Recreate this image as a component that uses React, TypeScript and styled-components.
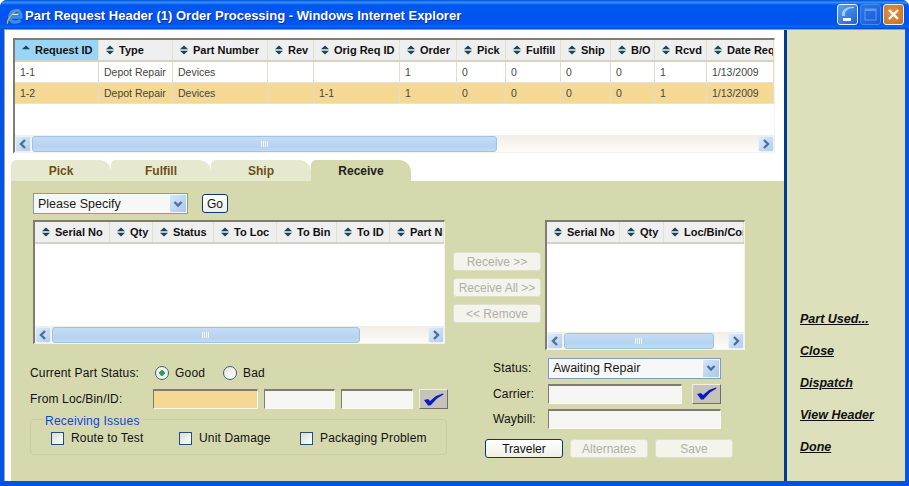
import styled, { createGlobalStyle } from 'styled-components'

const GlobalStyle = createGlobalStyle`
    html, body {
        margin: 0;
        padding: 0;
        width: 909px;
        height: 486px;
        overflow: hidden;
        background: #fff;
    }
    * {
        box-sizing: border-box;
    }
`

const Window = styled.div`
    width: 909px;
    height: 486px;
    display: flex;
    flex-direction: column;
    background: #0053e5;
    border-radius: 7px 7px 0 0;
    font-family: 'Liberation Sans', Arial, sans-serif;
    font-size: 12px;
    color: #111;
`

const TitleBar = styled.div`
    height: 29px;
    flex: none;
    display: flex;
    align-items: center;
    padding: 2px 5px 0 6px;
    border-radius: 7px 7px 0 0;
    background: linear-gradient(
        to bottom,
        #0a5fe0 0,
        #0a5fe0 1px,
        #3d95ff 2px,
        #2a80f8 3px,
        #0058ee 5px,
        #0053ee 24px,
        #0a66f4 27px,
        #0045c8 29px
    );
`

const TitleText = styled.div`
    flex: 1;
    margin-left: 1px;
    color: #fff;
    font-family: 'Liberation Sans', Arial, sans-serif;
    font-weight: bold;
    font-size: 13px;
    text-shadow: 1px 1px 0 #0a2f9c;
    white-space: nowrap;
`

const WinButton = styled.div<{ $kind: 'min' | 'max' | 'close' }>`
    width: 21px;
    height: 21px;
    margin-left: 2px;
    margin-bottom: 2px;
    border-radius: 3px;
    border: 1px solid ${(p) => (p.$kind === 'max' ? '#3f8cf0' : '#e8f0ff')};
    background: ${(p) =>
        p.$kind === 'close'
            ? 'radial-gradient(circle at 40% 40%, #e09448, #c86f1c)'
            : p.$kind === 'max'
            ? 'linear-gradient(135deg, #2c74e6, #1a5bd6)'
            : 'linear-gradient(135deg, #5aa2ee, #1f62d8)'};
    display: flex;
    align-items: center;
    justify-content: center;
`

const Body = styled.div`
    flex: 1;
    min-height: 0;
    display: flex;
    margin: 0 4px 5px;
    background: #fff;
    border-top: 1px solid #9c9c90;
`

const Main = styled.div`
    width: 780px;
    flex: none;
    display: flex;
    flex-direction: column;
    border-left: 1px solid #a8a89c;
`

const SidePanel = styled.div`
    flex: 1;
    display: flex;
    flex-direction: column;
    justify-content: flex-end;
    gap: 18px;
    padding: 0 0 27px 13px;
    background: #dee0bb;
    border-left: 3px solid #003c8f;
`

const SideLink = styled.a`
    height: 14px;
    line-height: 14px;
    font-size: 12.5px;
    font-weight: bold;
    font-style: italic;
    text-decoration: underline;
    color: #111;
`

const GridFrame = styled.div<{ $width: number; $height: number }>`
    width: ${(p) => p.$width}px;
    height: ${(p) => p.$height}px;
    flex: none;
    display: flex;
    flex-direction: column;
    background: #fff;
    border-style: solid;
    border-width: 2px 1px 1px 2px;
    border-color: #7f7d72 #f4f2ea #f4f2ea #7f7d72;
`

const TopGrid = styled(GridFrame)`
    margin: 8px 0 7px 8px;
`

const HeaderRow = styled.div<{ $columns: string; $height: number }>`
    display: grid;
    grid-template-columns: ${(p) => p.$columns};
    height: ${(p) => p.$height}px;
    flex: none;
    background: #efefef;
    border-bottom: 2px solid #d6d3c4;
    overflow: hidden;
`

const HeaderCell = styled.div<{ $active?: boolean }>`
    display: flex;
    align-items: center;
    gap: 5px;
    padding-left: 7px;
    font-size: 11px;
    font-weight: bold;
    white-space: nowrap;
    overflow: hidden;
    background: ${(p) => (p.$active ? '#99d5f6' : 'transparent')};
    border-right: 1px solid #e2e2ca;
`

const DataRow = styled.div<{ $columns: string; $selected?: boolean }>`
    display: grid;
    grid-template-columns: ${(p) => p.$columns};
    height: 21px;
    flex: none;
    background: ${(p) => (p.$selected ? '#f5d893' : '#fff')};
    border-bottom: 1px solid #e6e2d6;
`

const DataCell = styled.div`
    display: flex;
    align-items: center;
    padding-left: 5px;
    font-size: 10.5px;
    color: #46463e;
    white-space: nowrap;
    overflow: hidden;
    border-right: 1px solid #e2dccc;
`

const GridSpacer = styled.div`
    flex: 1;
`

const Scrollbar = styled.div`
    height: 17px;
    flex: none;
    display: flex;
    align-items: center;
    gap: 1px;
    background: linear-gradient(to bottom, #f1eee6, #fdfcfa);
`

const ScrollArrow = styled.div`
    width: 16px;
    height: 16px;
    flex: none;
    border-radius: 2px;
    border: 1px solid #e8f2fc;
    background: linear-gradient(to bottom right, #dcebfb, #b4cdec);
    display: flex;
    align-items: center;
    justify-content: center;
`

const ScrollThumb = styled.div<{ $width: number }>`
    width: ${(p) => p.$width}px;
    height: 16px;
    flex: none;
    border-radius: 3px;
    border: 1px solid #9cc4e8;
    background: linear-gradient(to bottom, #c6dcf6, #b6d3f0 70%, #c4daf2);
    display: flex;
    align-items: center;
    justify-content: center;
`

const ScrollTrack = styled.div`
    flex: 1;
`

const Tabs = styled.div`
    display: flex;
    height: 21px;
    flex: none;
    margin-left: 6px;
`

const Tab = styled.div<{ $active?: boolean }>`
    width: 100px;
    display: flex;
    align-items: center;
    justify-content: center;
    font-size: 12px;
    font-weight: bold;
    border-radius: 5px 12px 0 0;
    color: ${(p) => (p.$active ? '#222' : '#6d4f14')};
    background: ${(p) => (p.$active ? '#d5d9ad' : '#e6e9cf')};
`

const TabPanel = styled.div`
    flex: 1;
    margin-left: 6px;
    padding: 12px 0 0 19px;
    display: flex;
    flex-direction: column;
    background: #d5d9ad;
`

const TopControls = styled.div`
    display: flex;
    align-items: center;
    gap: 14px;
    height: 21px;
    padding-left: 3px;
    flex: none;
`

const SelectBox = styled.div<{ $width: number }>`
    width: ${(p) => p.$width}px;
    height: 21px;
    display: flex;
    align-items: center;
    justify-content: space-between;
    padding: 0 1px 0 4px;
    font-size: 12.5px;
    color: #1a1a1a;
    background: #f7f7f7;
    border: 1px solid #7f9db9;
`

const SelectArrow = styled.div`
    width: 16px;
    height: 17px;
    display: flex;
    align-items: center;
    justify-content: center;
    background: linear-gradient(135deg, #d6e6fb, #a9c6ea);
    border-radius: 1px;
`

const Button = styled.div<{ $width: number; $disabled?: boolean }>`
    width: ${(p) => p.$width}px;
    height: 19px;
    display: flex;
    align-items: center;
    justify-content: center;
    font-size: 12px;
    white-space: nowrap;
    border-radius: 3px;
    color: ${(p) => (p.$disabled ? '#b0b0a6' : '#111')};
    background: ${(p) => (p.$disabled ? '#f4f3ec' : 'linear-gradient(to bottom, #fff, #f0efe6)')};
    border: 1px solid ${(p) => (p.$disabled ? '#dfdfcf' : '#003c74')};
`

const GridsRow = styled.div`
    display: flex;
    align-items: flex-start;
    height: 130px;
    flex: none;
    margin-top: 6px;
    padding-left: 3px;
`

const MoveButtons = styled.div`
    width: 88px;
    flex: none;
    display: flex;
    flex-direction: column;
    gap: 7px;
    margin: 32px 4px 0 8px;
`

const BottomRow = styled.div`
    display: flex;
    margin-top: 8px;
`

const StatusColumn = styled.div`
    width: 417px;
    flex: none;
    padding-top: 6px;
    margin-right: 38px;
`

const StatusRow = styled.div`
    height: 18px;
    display: flex;
    align-items: center;
`

const FieldLabel = styled.div<{ $width: number }>`
    width: ${(p) => p.$width}px;
    flex: none;
    font-size: 12px;
    letter-spacing: 0.15px;
    white-space: nowrap;
`

const Radio = styled.div<{ $checked?: boolean }>`
    width: 14px;
    height: 14px;
    flex: none;
    border-radius: 50%;
    border: 1px solid #3a5f8c;
    background: ${(p) =>
        p.$checked
            ? 'radial-gradient(circle, #2f9a5c 0, #2f9a5c 2.5px, #f2f2ec 3px)'
            : 'linear-gradient(135deg, #e4e4dc, #fff)'};
`

const RadioLabel = styled.div<{ $width: number }>`
    width: ${(p) => p.$width}px;
    flex: none;
    margin-left: 6px;
    letter-spacing: 0.2px;
`

const LocRow = styled.div`
    height: 20px;
    display: flex;
    align-items: center;
    gap: 6px;
    margin-top: 7px;
`

const TextInput = styled.div<{ $width: number; $required?: boolean }>`
    width: ${(p) => p.$width}px;
    height: 20px;
    flex: none;
    background: ${(p) => (p.$required ? '#f5d893' : '#f5f5f3')};
    border-style: solid;
    border-width: 2px 1px 1px 1px;
    border-color: #7f7d72 #fbfbf4 #fbfbf4 #7f7d72;
`

const LookupButton = styled.div`
    width: 29px;
    height: 20px;
    flex: none;
    display: flex;
    align-items: center;
    justify-content: center;
    background: #c6c3b9;
    border-style: solid;
    border-width: 1px;
    border-color: #eeeee4 #6f6f72 #6f6f72 #eeeee4;
`

const IssuesFieldset = styled.fieldset`
    height: 44px;
    margin: 2px 0 0;
    padding: 0 0 6px 20px;
    display: flex;
    align-items: center;
    border: 1px solid #cacda0;
    border-radius: 4px;
    min-inline-size: 0;
`

const IssuesLegend = styled.legend`
    margin-left: -7px;
    padding: 4px 1px 0;
    font-size: 12px;
    line-height: 13px;
    color: #0a47d6;
    letter-spacing: 0.25px;
`

const CheckItem = styled.div<{ $width: number }>`
    width: ${(p) => p.$width}px;
    display: flex;
    align-items: center;
    gap: 7px;
    letter-spacing: 0.15px;
    white-space: nowrap;
`

const CheckBox = styled.div`
    width: 13px;
    height: 13px;
    flex: none;
    border: 1px solid #1c5180;
    background: linear-gradient(135deg, #dcdcd4, #fff);
`

const OrderForm = styled.div`
    display: flex;
    flex-direction: column;
    width: 248px;
    flex: none;
`

const FormGrid = styled.div`
    display: grid;
    grid-template-columns: 55px 134px 10px 29px;
    grid-auto-rows: 20px;
    row-gap: 5.5px;
    margin-left: 8px;
    align-items: center;
`

const WideField = styled.div`
    grid-column: 2 / 5;
`

const FormActions = styled.div`
    display: flex;
    gap: 7px;
    margin-top: 10px;
`

const topColumns = '84px 74px 95px 46px 86px 57px 49px 55px 50px 44px 52px 1fr'
const lowerColumns = '75px 43px 61px 63px 60px 53px 1fr'
const rightColumns = '73px 44px 1fr'

const SortIcon = ({ ascOnly }: { ascOnly?: boolean }) => (
    <svg width="8" height="10" viewBox="0 0 8 10" style={{ flex: 'none' }}>
        <path d="M4 0.5 L8 4.2 H0 Z" fill="#174656" />
        {!ascOnly && <path d="M4 9.5 L8 5.8 H0 Z" fill="#174656" />}
    </svg>
)

const Grip = () => (
    <svg width="8" height="6" viewBox="0 0 8 6">
        <path d="M0.5 0V6M2.5 0V6M4.5 0V6M6.5 0V6" stroke="#eef5fd" strokeWidth="1" />
    </svg>
)

const Chevron = ({ dir }: { dir: 'left' | 'right' | 'down' }) => (
    <svg width="10" height="10" viewBox="0 0 10 10">
        <path
            d={dir === 'left' ? 'M7 1 L3 5 L7 9' : dir === 'right' ? 'M3 1 L7 5 L3 9' : 'M1.5 3 L5 6.5 L8.5 3'}
            fill="none"
            stroke="#4d6f9c"
            strokeWidth="2.4"
        />
    </svg>
)

const CheckMark = () => (
    <svg width="20" height="13" viewBox="0 0 20 13">
        <path d="M0 7 L4 6 L6 8 L12 3 L19 0.5 L19.5 1.5 L13 5.5 L6.5 12.5 L4 12.5 Z" fill="#0b1bc8" />
    </svg>
)

const IeLogo = () => (
    <svg width="18" height="18" viewBox="0 0 18 18" style={{ flex: 'none' }}>
        <path
            d="M5 10.2 H15 C15.8 6 12.5 3 9.5 3.5 C5 4 2.8 8.5 4 12 C5.2 15.5 10.5 16.2 14.5 13.4"
            fill="none"
            stroke="#3f8de6"
            strokeWidth="3.2"
        />
        <path d="M6 7.4 H12.5" stroke="#d8ecfc" strokeWidth="1.5" />
        <path d="M1 17 C-0.5 13 6 4 17.5 0.5 C10 3 2.5 10 2 16.5 Z" fill="#e8a93a" />
    </svg>
)

const Scroll = ({ thumb }: { thumb: number }) => (
    <Scrollbar>
        <ScrollArrow>
            <Chevron dir="left" />
        </ScrollArrow>
        <ScrollThumb $width={thumb}>
            <Grip />
        </ScrollThumb>
        <ScrollTrack />
        <ScrollArrow>
            <Chevron dir="right" />
        </ScrollArrow>
    </Scrollbar>
)

const Header = ({ labels, columns, height }: { labels: string[]; columns: string; height: number }) => (
    <HeaderRow $columns={columns} $height={height}>
        {labels.map((label) => (
            <HeaderCell key={label}>
                <SortIcon />
                {label}
            </HeaderCell>
        ))}
    </HeaderRow>
)

const topLabels = ['Type', 'Part Number', 'Rev', 'Orig Req ID', 'Order', 'Pick', 'Fulfill', 'Ship', 'B/O', 'Rcvd', 'Date Req']

const requests = [
    ['1-1', 'Depot Repair', 'Devices', '', '', '1', '0', '0', '0', '0', '1', '1/13/2009'],
    ['1-2', 'Depot Repair', 'Devices', '', '1-1', '1', '0', '0', '0', '0', '1', '1/13/2009'],
]

export default function App() {
    return (
        <Window>
            <GlobalStyle />
            <TitleBar>
                <IeLogo />
                <TitleText>Part Request Header (1) Order Processing - Windows Internet Explorer</TitleText>
                <WinButton $kind="min">
                    <svg width="19" height="19" viewBox="0 0 19 19">
                        <path d="M16 3 C10 3 6 6 7 11 H4 C3 6 8 1 16 2 Z" fill="#a8cdf4" />
                        <rect x="5" y="13" width="8" height="3" fill="#fff" />
                    </svg>
                </WinButton>
                <WinButton $kind="max">
                    <svg width="13" height="13" viewBox="0 0 13 13">
                        <rect x="1" y="1" width="11" height="11" fill="none" stroke="#5d9cf0" strokeWidth="1" />
                        <rect x="1" y="1" width="11" height="2" fill="#5d9cf0" />
                    </svg>
                </WinButton>
                <WinButton $kind="close">
                    <svg width="13" height="13" viewBox="0 0 13 13">
                        <path d="M2 2 L11 11 M11 2 L2 11" stroke="#fff" strokeWidth="2.4" />
                    </svg>
                </WinButton>
            </TitleBar>
            <Body>
                <Main>
                    <TopGrid $width={762} $height={115}>
                        <HeaderRow $columns={topColumns} $height={22}>
                            <HeaderCell $active>
                                <SortIcon ascOnly />
                                Request ID
                            </HeaderCell>
                            {topLabels.map((label) => (
                                <HeaderCell key={label}>
                                    <SortIcon />
                                    {label}
                                </HeaderCell>
                            ))}
                        </HeaderRow>
                        {requests.map((row, i) => (
                            <DataRow key={row[0]} $columns={topColumns} $selected={i === 1}>
                                {row.map((cell, c) => (
                                    <DataCell key={c}>{cell}</DataCell>
                                ))}
                            </DataRow>
                        ))}
                        <GridSpacer />
                        <Scroll thumb={465} />
                    </TopGrid>
                    <Tabs>
                        <Tab>Pick</Tab>
                        <Tab>Fulfill</Tab>
                        <Tab>Ship</Tab>
                        <Tab $active>Receive</Tab>
                    </Tabs>
                    <TabPanel>
                        <TopControls>
                            <SelectBox $width={155}>
                                Please Specify
                                <SelectArrow>
                                    <Chevron dir="down" />
                                </SelectArrow>
                            </SelectBox>
                            <Button $width={26}>Go</Button>
                        </TopControls>
                        <GridsRow>
                            <GridFrame $width={412} $height={124}>
                                <Header
                                    labels={['Serial No', 'Qty', 'Status', 'To Loc', 'To Bin', 'To ID', 'Part Number']}
                                    columns={lowerColumns}
                                    height={22}
                                />
                                <GridSpacer />
                                <Scroll thumb={308} />
                            </GridFrame>
                            <MoveButtons>
                                <Button $width={88} $disabled>
                                    Receive &gt;&gt;
                                </Button>
                                <Button $width={88} $disabled>
                                    Receive All &gt;&gt;
                                </Button>
                                <Button $width={88} $disabled>
                                    &lt;&lt; Remove
                                </Button>
                            </MoveButtons>
                            <GridFrame $width={200} $height={130}>
                                <Header labels={['Serial No', 'Qty', 'Loc/Bin/Cond']} columns={rightColumns} height={22} />
                                <GridSpacer />
                                <Scroll thumb={150} />
                            </GridFrame>
                        </GridsRow>
                        <BottomRow>
                            <StatusColumn>
                                <StatusRow>
                                    <FieldLabel $width={125}>Current Part Status:</FieldLabel>
                                    <Radio $checked />
                                    <RadioLabel $width={48}>Good</RadioLabel>
                                    <Radio />
                                    <RadioLabel $width={40}>Bad</RadioLabel>
                                </StatusRow>
                                <LocRow>
                                    <FieldLabel $width={117}>From Loc/Bin/ID:</FieldLabel>
                                    <TextInput $width={105} $required />
                                    <TextInput $width={71} />
                                    <TextInput $width={72} />
                                    <LookupButton>
                                        <CheckMark />
                                    </LookupButton>
                                </LocRow>
                                <IssuesFieldset>
                                    <IssuesLegend>Receiving Issues</IssuesLegend>
                                    <CheckItem $width={128}>
                                        <CheckBox />
                                        Route to Test
                                    </CheckItem>
                                    <CheckItem $width={121}>
                                        <CheckBox />
                                        Unit Damage
                                    </CheckItem>
                                    <CheckItem $width={130}>
                                        <CheckBox />
                                        Packaging Problem
                                    </CheckItem>
                                </IssuesFieldset>
                            </StatusColumn>
                            <OrderForm>
                                <FormGrid>
                                    <FieldLabel $width={55}>Status:</FieldLabel>
                                    <WideField>
                                        <SelectBox $width={173}>
                                            Awaiting Repair
                                            <SelectArrow>
                                                <Chevron dir="down" />
                                            </SelectArrow>
                                        </SelectBox>
                                    </WideField>
                                    <FieldLabel $width={55}>Carrier:</FieldLabel>
                                    <TextInput $width={134} />
                                    <span />
                                    <LookupButton>
                                        <CheckMark />
                                    </LookupButton>
                                    <FieldLabel $width={55}>Waybill:</FieldLabel>
                                    <WideField>
                                        <TextInput $width={173} />
                                    </WideField>
                                </FormGrid>
                                <FormActions>
                                    <Button $width={78}>Traveler</Button>
                                    <Button $width={78} $disabled>
                                        Alternates
                                    </Button>
                                    <Button $width={78} $disabled>
                                        Save
                                    </Button>
                                </FormActions>
                            </OrderForm>
                        </BottomRow>
                    </TabPanel>
                </Main>
                <SidePanel>
                    <SideLink>Part Used...</SideLink>
                    <SideLink>Close</SideLink>
                    <SideLink>Dispatch</SideLink>
                    <SideLink>View Header</SideLink>
                    <SideLink>Done</SideLink>
                </SidePanel>
            </Body>
        </Window>
    )
}
